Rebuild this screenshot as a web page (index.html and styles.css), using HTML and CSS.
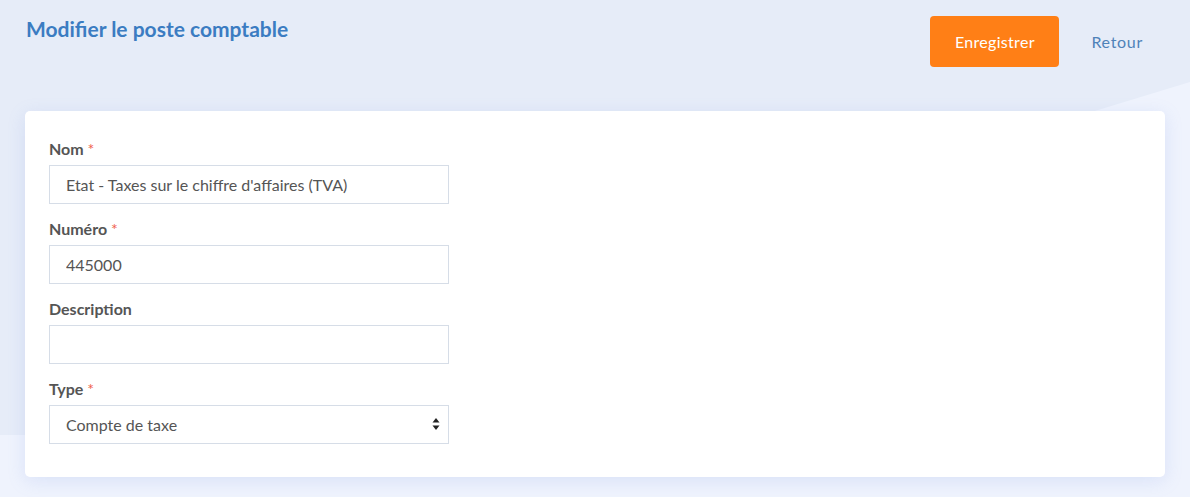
FILE: index.html
```html
<!DOCTYPE html>
<html lang="fr">
<head>
    <meta charset="UTF-8">
    <meta name="viewport" content="width=device-width, initial-scale=1.0">
    <title>Modifier le poste comptable</title>
    <link rel="stylesheet" href="styles.css">
</head>
<body>
    <div class="backdrop"></div>
    <div class="page">
        <div class="page-header">
            <h1>Modifier le poste comptable</h1>
            <div class="actions">
                <button type="submit" form="accountForm" class="btn-save">Enregistrer</button>
                <a href="#" class="btn-back">Retour</a>
            </div>
        </div>

        <div class="card">
            <form id="accountForm">
                <div class="form-group">
                    <label for="name">Nom <span class="req">*</span></label>
                    <input type="text" id="name" name="name" value="Etat - Taxes sur le chiffre d'affaires (TVA)">
                </div>
                <div class="form-group">
                    <label for="number">Numéro <span class="req">*</span></label>
                    <input type="text" id="number" name="number" value="445000">
                </div>
                <div class="form-group">
                    <label for="description">Description</label>
                    <input type="text" id="description" name="description">
                </div>
                <div class="form-group">
                    <label for="type">Type <span class="req">*</span></label>
                    <div class="select-wrap">
                        <select id="type" name="type">
                            <option value="tax" selected>Compte de taxe</option>
                            <option value="bank">Compte bancaire</option>
                            <option value="other">Autre</option>
                        </select>
                        <svg class="select-arrow" width="8" height="14" viewBox="0 0 8 14">
                            <path d="M4 1 L7.5 5.5 H0.5 Z" fill="#222"/>
                            <path d="M4 13 L7.5 8.5 H0.5 Z" fill="#222"/>
                        </svg>
                    </div>
                </div>
            </form>
        </div>
    </div>
</body>
</html>
```

FILE: styles.css
```css
body {
    margin: 0;
    font-family: Lato, "Open Sans", sans-serif;
    background-color: #eff3fd;
    color: #555;
    min-height: 497px;
    position: relative;
}
.backdrop {
    position: absolute;
    top: 0;
    left: 0;
    right: 0;
    height: 435px;
    background-color: #e6ecf8;
    clip-path: polygon(0 0, 100% 0, 100% 82px, 30px 435px, 0 435px);
}
.page {
    position: relative;
    padding: 0 25px;
}
.page-header {
    display: flex;
    justify-content: space-between;
    align-items: flex-start;
    height: 111px;
}
h1 {
    margin: 16px 0 0 1px;
    font-size: 21px;
    line-height: 25px;
    font-weight: 700;
    color: #3b7cc2;
}
.actions {
    display: flex;
    align-items: center;
    margin-top: 16px;
    margin-right: 22px;
}
.btn-save {
    width: 129px;
    height: 51px;
    border: none;
    border-radius: 4px;
    background-color: #ff7f16;
    color: #fff;
    font-family: inherit;
    font-size: 16px;
    letter-spacing: 0.3px;
    cursor: pointer;
}
.btn-back {
    margin-left: 32px;
    color: #4f82b8;
    font-size: 16px;
    letter-spacing: 0.7px;
    text-decoration: none;
}
.card {
    background-color: #fff;
    border-radius: 5px;
    padding: 28px 24px 18px;
    box-shadow: 0 4px 18px rgba(120, 150, 230, 0.18);
}
.form-group {
    margin-bottom: 15px;
}
label {
    display: block;
    height: 20px;
    line-height: 19px;
    margin-bottom: 6px;
    font-size: 16px;
    font-weight: 700;
    color: #555;
}
.req {
    color: #f0614d;
    font-weight: 400;
}
input, select {
    display: block;
    width: 400px;
    height: 39px;
    box-sizing: border-box;
    padding: 0 16px;
    border: 1px solid #d6dde7;
    border-radius: 0;
    background-color: #fff;
    font-family: inherit;
    font-size: 16px;
    color: #555;
    outline: none;
}
.select-wrap {
    position: relative;
    width: 400px;
}
select {
    appearance: none;
    -webkit-appearance: none;
}
.select-arrow {
    position: absolute;
    right: 9px;
    top: 12px;
    pointer-events: none;
}
```
